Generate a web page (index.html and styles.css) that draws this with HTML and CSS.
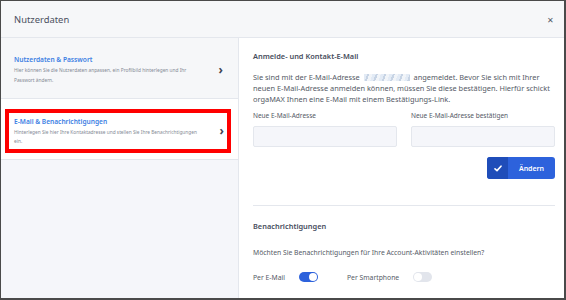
FILE: index.html
```html
<!DOCTYPE html>
<html lang="de">
<head>
    <meta charset="UTF-8">
    <title>Nutzerdaten</title>
    <link rel="stylesheet" href="styles.css">
</head>
<body>
    <div class="dialog">
        <div class="header">
            <span class="title">Nutzerdaten</span>
            <span class="close">&#x2715;</span>
        </div>
        <div class="content">
            <div class="sidebar">
                <div class="nav-item first">
                    <div class="nav-text">
                        <div class="nav-title">Nutzerdaten &amp; Passwort</div>
                        <div class="nav-desc">Hier können Sie die Nutzerdaten anpassen, ein Profilbild hinterlegen und Ihr Passwort ändern.</div>
                    </div>
                    <span class="chevron">&#x203A;</span>
                </div>
                <div class="nav-item active">
                    <div class="highlight">
                        <div class="nav-text">
                            <div class="nav-title">E-Mail &amp; Benachrichtigungen</div>
                            <div class="nav-desc">Hinterlegen Sie hier Ihre Kontaktadresse und stellen Sie Ihre Benachrichtigungen ein.</div>
                        </div>
                        <span class="chevron">&#x203A;</span>
                    </div>
                </div>
            </div>
            <div class="main">
                <h2 class="section-title">Anmelde- und Kontakt-E-Mail</h2>
                <p class="text intro">Sie sind mit der E-Mail-Adresse <span class="blurred"></span> angemeldet. Bevor Sie sich mit Ihrer neuen E-Mail-Adresse anmelden können, müssen Sie diese bestätigen. Hierfür schickt orgaMAX Ihnen eine E-Mail mit einem Bestätigungs-Link.</p>
                <div class="fields">
                    <label class="field">
                        <span class="label">Neue E-Mail-Adresse</span>
                        <span class="input"></span>
                    </label>
                    <label class="field">
                        <span class="label">Neue E-Mail-Adresse bestätigen</span>
                        <span class="input"></span>
                    </label>
                </div>
                <div class="actions">
                    <button class="btn">
                        <span class="btn-icon">
                            <svg width="8" height="7" viewBox="0 0 8 7"><path d="M1 3.8 L3 5.6 L7 1.2" fill="none" stroke="#fff" stroke-width="1.6" stroke-linecap="round" stroke-linejoin="round"/></svg>
                        </span>
                        <span class="btn-label">Ändern</span>
                    </button>
                </div>
                <hr class="divider">
                <h2 class="section-title notify">Benachrichtigungen</h2>
                <p class="text">Möchten Sie Benachrichtigungen für Ihre Account-Aktivitäten einstellen?</p>
                <div class="toggles">
                    <span class="toggle-label">Per E-Mail</span>
                    <span class="switch on"></span>
                    <span class="toggle-label">Per Smartphone</span>
                    <span class="switch"></span>
                </div>
            </div>
        </div>
    </div>
</body>
</html>
```

FILE: styles.css
```css
body {
    margin: 0;
    font-family: "Noto Sans", sans-serif;
    color: #4b5060;
}

.dialog {
    width: 566px;
    height: 300px;
    box-sizing: border-box;
    border-style: solid;
    border-color: #4a4a4a;
    border-width: 1px 2px 2px 1px;
    display: flex;
    flex-direction: column;
    overflow: hidden;
    background-color: #fff;
}

.header {
    height: 36px;
    flex-shrink: 0;
    background-color: #f6f7f9;
    border-bottom: 1px solid #e4e7ed;
    display: flex;
    align-items: center;
    justify-content: space-between;
    padding: 0 10px 0 13px;
}

.title {
    font-size: 9.4px;
    color: #4b5060;
}

.close {
    font-size: 8px;
    color: #555a66;
}

.content {
    flex: 1;
    display: grid;
    grid-template-columns: 238px 1fr;
}

.sidebar {
    background-color: #f5f6fa;
    border-right: 1px solid #e4e7ed;
}

.nav-item {
    border-bottom: 1px solid #e4e7ed;
    display: flex;
    align-items: center;
}

.nav-item.first {
    height: 61px;
    padding: 4px 15px 0 13px;
    box-sizing: border-box;
    background-color: #f6f7f9;
}

.nav-item.active {
    height: 61px;
    box-sizing: border-box;
    background-color: #fff;
    padding: 10px 7px 6px 4px;
}

.highlight {
    flex: 1;
    height: 44px;
    box-sizing: border-box;
    border: 4px solid #ff0000;
    display: flex;
    align-items: center;
    padding: 1px 3px 0 5px;
}

.nav-text {
    flex: 1;
}

.nav-title {
    font-size: 6.6px;
    font-weight: 600;
    color: #3c7ee3;
    margin-bottom: 2px;
}

.nav-desc {
    font-size: 4.8px;
    line-height: 9.5px;
    color: #858a96;
    max-width: 192px;
}

.chevron {
    font-size: 12px;
    color: #3e4452;
    font-weight: 700;
    margin-top: -2px;
}

.main {
    padding: 13px 9px 0 14px;
}

.section-title {
    font-size: 7.4px;
    font-weight: 600;
    margin: 0 0 11px;
    color: #474d5d;
}

.section-title.notify {
    margin-bottom: 16px;
}

.text {
    font-size: 6.8px;
    line-height: 11px;
    margin: 0;
    color: #555a66;
}

.text.intro {
    font-size: 7.4px;
}

.blurred {
    display: inline-block;
    width: 46px;
    height: 7px;
    margin: 0 2px;
    vertical-align: -1px;
    background: repeating-linear-gradient(110deg, #dce6f3 0 3px, #b9c9de 3px 5px, #eef2f7 5px 8px);
    opacity: 0.8;
}

.fields {
    display: grid;
    grid-template-columns: 1fr 1fr;
    gap: 14px;
    margin-top: 6px;
}

.field {
    display: flex;
    flex-direction: column;
}

.label {
    font-size: 6.5px;
    color: #555a66;
    margin-bottom: 6px;
}

.input {
    height: 19px;
    background-color: #f5f6fa;
    border: 1px solid #e4e7ed;
    border-radius: 2px;
}

.actions {
    display: flex;
    justify-content: flex-end;
    margin-top: 10px;
}

.btn {
    display: flex;
    width: 68px;
    height: 22px;
    padding: 0;
    border: none;
    border-radius: 3px;
    overflow: hidden;
    background-color: #2d62dc;
    font-family: inherit;
    cursor: pointer;
}

.btn-icon {
    width: 21px;
    background-color: #1f4db9;
    display: flex;
    align-items: center;
    justify-content: center;
}

.btn-label {
    flex: 1;
    display: flex;
    align-items: center;
    justify-content: center;
    color: #fff;
    font-size: 7px;
    font-weight: 600;
}

.divider {
    border: none;
    border-top: 1px solid #e4e7ed;
    margin: 26px 0 15px;
}

.toggles {
    display: flex;
    align-items: center;
    margin-top: 14px;
}

.toggle-label {
    font-size: 6.8px;
    color: #555a66;
    margin-right: 14px;
}

.switch {
    width: 19px;
    height: 10px;
    border-radius: 5px;
    background-color: #e2e5ec;
    position: relative;
    margin-right: 29px;
}

.switch::after {
    content: "";
    position: absolute;
    top: 1px;
    left: 1px;
    width: 8px;
    height: 8px;
    border-radius: 50%;
    background-color: #fff;
}

.switch.on {
    background-color: #2d62dc;
}

.switch.on::after {
    left: 10px;
}
```
